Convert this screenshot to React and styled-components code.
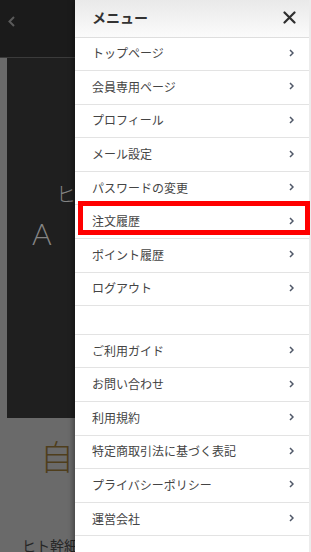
import React from "react";
import styled, { createGlobalStyle } from "styled-components";

const Global = createGlobalStyle`
  html, body { margin: 0; padding: 0; overflow: hidden; }
  body { font-family: "Noto Sans CJK JP", "Noto Sans", sans-serif; }
  * { box-sizing: border-box; }
`;

const Frame = styled.div`
  position: relative;
  width: 311px;
  height: 552px;
  overflow: hidden;
  background: #6a6a6a;
  font-family: "Noto Sans CJK JP", "Noto Sans", sans-serif;
`;

const TopBar = styled.header`
  height: 58px;
  background: #1b1b1b;
  border-bottom: 1px solid #3b3b3b;
  padding: 8px 0 0 7px;
`;

const Hero = styled.section`
  margin-left: 7px;
  height: 360px;
  background: #1f1f1f;
  padding-top: 124px;
  color: #858585;
  font-weight: 300;
  white-space: nowrap;
`;

const HeroLine = styled.div`
  font-size: ${(p) => p.$size}px;
  line-height: 1.2;
  margin-left: ${(p) => p.$indent}px;
  margin-top: ${(p) => p.$gap || 0}px;
  font-family: ${(p) => (p.$latin ? `Lato, "Open Sans", sans-serif` : `"Noto Sans CJK JP", sans-serif`)};
`;

const Title = styled.h1`
  margin: 18px 0 0 40px;
  font-size: 34px;
  line-height: 1.2;
  font-weight: 300;
  color: #4f3e1c;
  white-space: nowrap;
`;

const Lead = styled.p`
  margin: 59px 0 0 22px;
  font-size: 14px;
  line-height: 1.4;
  color: #262626;
  white-space: nowrap;
`;

const Drawer = styled.nav`
  position: absolute;
  top: 0;
  right: 0;
  width: 236px;
  height: 100%;
  background: #fff;
  box-shadow: -2px 0 5px rgba(0, 0, 0, 0.35);
  border-right: 2px solid #ececec;
`;

const DrawerHead = styled.div`
  height: 37.5px;
  display: flex;
  align-items: center;
  justify-content: space-between;
  padding: 0 13px 2px 17px;
  background: linear-gradient(#e9e9e9, #fbfbfb);
  border-bottom: 1px solid #dedede;
`;

const HeadTitle = styled.span`
  font-size: 14px;
  font-weight: 700;
  color: #333;
`;

const List = styled.ul`
  list-style: none;
  margin: 0;
  padding: 0;
`;

const Item = styled.li`
  position: relative;
  height: ${(p) => (p.$spacer ? 28.5 : 33.6)}px;
  border-bottom: 1px solid #e3e3e3;
  display: flex;
  align-items: center;
  justify-content: space-between;
  padding: 0 15px 2px 17px;
  font-size: 12px;
  color: #444;
`;

const Highlight = styled.span`
  position: absolute;
  top: -4px;
  left: 3px;
  width: 232px;
  height: 34px;
  border: 5px solid #ff0000;
  pointer-events: none;
`;

const Chevron = () => (
  <svg width="5" height="8" viewBox="0 0 5 8">
    <path d="M1 1l3 3-3 3" fill="none" stroke="#505868" strokeWidth="1.5" />
  </svg>
);

const Close = () => (
  <svg width="13" height="13" viewBox="0 0 13 13">
    <path d="M1.5 1.5l10 10M11.5 1.5l-10 10" stroke="#2e2e2e" strokeWidth="2.2" strokeLinecap="round" />
  </svg>
);

const Back = () => (
  <svg width="9" height="11" viewBox="0 0 9 11">
    <path d="M7 1L2.5 5.5 7 10" fill="none" stroke="#5a5a5a" strokeWidth="2" />
  </svg>
);

const first = ["トップページ", "会員専用ページ", "プロフィール", "メール設定", "パスワードの変更", "注文履歴", "ポイント履歴", "ログアウト"];
const second = ["ご利用ガイド", "お問い合わせ", "利用規約", "特定商取引法に基づく表記", "プライバシーポリシー", "運営会社"];

export default function App() {
  return (
    <Frame>
      <Global />
      <TopBar>
        <Back />
      </TopBar>
      <Hero>
        <HeroLine $size={20} $indent={49}>ヒ</HeroLine>
        <HeroLine $size={30} $indent={25} $gap={9} $latin>A</HeroLine>
      </Hero>
      <Title>自分</Title>
      <Lead>ヒト幹細胞</Lead>
      <Drawer>
        <DrawerHead>
          <HeadTitle>メニュー</HeadTitle>
          <Close />
        </DrawerHead>
        <List>
          {first.map((t) => (
            <Item key={t}>
              <span>{t}</span>
              <Chevron />
              {t === "注文履歴" && <Highlight />}
            </Item>
          ))}
          <Item $spacer />
          {second.map((t) => (
            <Item key={t}>
              <span>{t}</span>
              <Chevron />
            </Item>
          ))}
        </List>
      </Drawer>
    </Frame>
  );
}
